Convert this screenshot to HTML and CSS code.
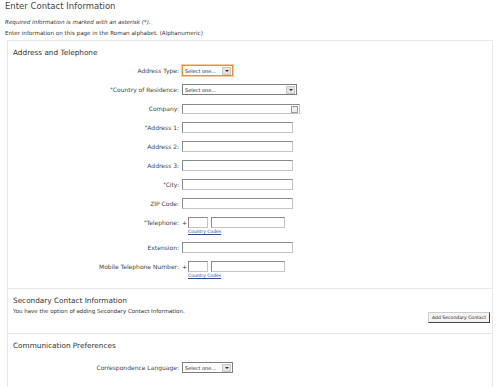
FILE: index.html
```html
<!DOCTYPE html>
<html lang="en">
  <head>
    <meta charset="UTF-8" />
    <title>Enter Contact Information</title>
    <link rel="stylesheet" href="styles.css">
  </head>
  <body>
    <div class="page">
      <h1>Enter Contact Information</h1>
      <p class="note required">Required information is marked with an asterisk (*).</p>
      <p class="note roman">Enter information on this page in the Roman alphabet. (Alphanumeric)</p>

      <div class="panel">
        <div class="section">
          <h2>Address and Telephone</h2>
          <div class="form">
            <div class="row">
              <label>Address Type:</label>
              <span class="select short focused"><span class="value">Select one...</span><span class="arrow"></span></span>
            </div>
            <div class="row">
              <label><sup>*</sup>Country of Residence:</label>
              <span class="select long"><span class="value">Select one...</span><span class="arrow"></span></span>
            </div>
            <div class="row">
              <label>Company:</label>
              <span class="input company"><span class="picker"></span></span>
            </div>
            <div class="row">
              <label><sup>*</sup>Address 1:</label>
              <span class="input"></span>
            </div>
            <div class="row">
              <label>Address 2:</label>
              <span class="input"></span>
            </div>
            <div class="row">
              <label>Address 3:</label>
              <span class="input"></span>
            </div>
            <div class="row">
              <label><sup>*</sup>City:</label>
              <span class="input"></span>
            </div>
            <div class="row">
              <label>ZIP Code:</label>
              <span class="input"></span>
            </div>
            <div class="row phone-row">
              <label><sup>*</sup>Telephone:</label>
              <div class="phone">
                <div class="phone-fields">
                  <span class="plus">+</span>
                  <span class="input cc"></span>
                  <span class="input num"></span>
                </div>
                <a href="#" class="codes">Country Codes</a>
              </div>
            </div>
            <div class="row">
              <label>Extension:</label>
              <span class="input"></span>
            </div>
            <div class="row phone-row">
              <label>Mobile Telephone Number:</label>
              <div class="phone">
                <div class="phone-fields">
                  <span class="plus">+</span>
                  <span class="input cc"></span>
                  <span class="input num"></span>
                </div>
                <a href="#" class="codes">Country Codes</a>
              </div>
            </div>
          </div>
        </div>

        <div class="section secondary">
          <h2>Secondary Contact Information</h2>
          <div class="secondary-body">
            <p class="note">You have the option of adding Secondary Contact Information.</p>
            <button class="btn">Add Secondary Contact</button>
          </div>
        </div>

        <div class="section">
          <h2>Communication Preferences</h2>
          <div class="form prefs">
            <div class="row">
              <label>Correspondence Language:</label>
              <span class="select short"><span class="value">Select one...</span><span class="arrow"></span></span>
            </div>
          </div>
        </div>
      </div>
    </div>
  </body>
</html>
```

FILE: styles.css
```css
body {
  margin: 0;
  background: #fff;
  color: #333;
  font-family: "DejaVu Sans", Verdana, sans-serif;
}
.page {
  padding: 0 5px;
}
h1 {
  font-size: 8.5px;
  font-weight: normal;
  margin: 0 0 7px;
  line-height: 12px;
  color: #444;
}
.note {
  font-size: 5.6px;
  margin: 0 0 4px;
  line-height: 7px;
  color: #333;
}
.required {
  font-style: italic;
}
.roman {
  margin-bottom: 3px;
}
.panel {
  margin: 0 6px 0 2px;
  border: 1px solid #e6e6e6;
  border-bottom: none;
  height: 360px;
}
.section {
  padding: 7px 0 0 5px;
  border-bottom: 1px solid #e6e6e6;
}
.section:last-child {
  border-bottom: none;
}
h2 {
  font-size: 7.3px;
  font-weight: normal;
  line-height: 10px;
  margin: 0;
  color: #333;
}
.form {
  padding: 3px 0 6px;
}
.form.prefs {
  padding-top: 7px;
}
.row {
  display: grid;
  grid-template-columns: 166px auto;
  column-gap: 3px;
  align-items: center;
  height: 19px;
}
.row label {
  font-size: 6px;
  text-align: right;
  color: #444;
}
sup {
  font-size: 5px;
  vertical-align: 1px;
}
.phone-row {
  height: 25px;
  align-items: start;
  padding-top: 4px;
  box-sizing: border-box;
}
.phone-row label {
  line-height: 11px;
}
.input {
  display: block;
  box-sizing: border-box;
  width: 111px;
  height: 11px;
  border: 1px solid #8a8a8a;
  border-right-color: #c4c4c4;
  border-bottom-color: #c4c4c4;
  background: #fff;
}
.company {
  width: 118px;
  position: relative;
  height: 10px;
}
.picker {
  position: absolute;
  right: 1px;
  top: 1px;
  width: 5px;
  height: 5px;
  border: 1px solid #999;
  background: #eee;
}
.select {
  display: flex;
  align-items: center;
  box-sizing: border-box;
  height: 11px;
  border: 1px solid #7f7f7f;
  background: #fff;
  font-size: 5px;
  color: #222;
}
.select .value {
  flex: 1;
  padding-left: 2px;
}
.select.short {
  width: 51px;
}
.select.long {
  width: 115px;
}
.select.focused {
  border: 1px solid #f08a3c;
  box-shadow: 0 0 0 1px #f9c9a0;
}
.arrow {
  width: 9px;
  height: 8px;
  margin-right: 1px;
  background: #e4e4e4;
  border: 1px solid #c8c8c8;
  box-sizing: border-box;
  position: relative;
}
.arrow::after {
  content: "";
  position: absolute;
  left: 2px;
  top: 2px;
  border-left: 2px solid transparent;
  border-right: 2px solid transparent;
  border-top: 2px solid #333;
}
.phone-fields {
  display: flex;
  align-items: center;
  gap: 3px;
}
.plus {
  font-size: 6px;
  width: 3px;
}
.input.cc {
  width: 20px;
}
.input.num {
  width: 74px;
}
.codes {
  display: block;
  margin: 1px 0 0 6px;
  font-size: 4.5px;
  color: #2a4a9a;
  line-height: 5px;
}
.secondary-body {
  display: flex;
  justify-content: space-between;
  align-items: flex-start;
  padding: 2px 2px 10px 0;
}
.secondary-body .note {
  font-size: 5.5px;
}
.btn {
  margin-top: 4px;
  font-family: "DejaVu Sans", Verdana, sans-serif;
  font-size: 4.6px;
  padding: 2px 3px;
  background: #f4f4f4;
  color: #222;
  border: 1px solid #ccc;
  border-right-color: #444;
  border-bottom-color: #444;
  border-radius: 0;
}
```
